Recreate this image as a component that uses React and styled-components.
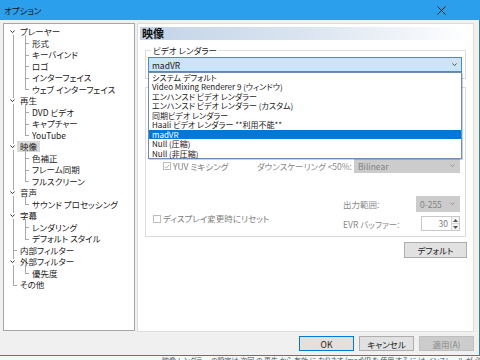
import React from 'react';
import styled, { createGlobalStyle } from 'styled-components';

const FONT = `"Noto Sans CJK JP", "Noto Sans", sans-serif`;

const Global = createGlobalStyle`
  html, body { margin: 0; padding: 0; background: #f0f0f0; }
  * { box-sizing: border-box; }
`;

const Screen = styled.div`
  width: 480px;
  height: 360px;
  overflow: hidden;
  display: flex;
  flex-direction: column;
  font-family: ${FONT};
  font-feature-settings: "palt";
  font-size: 8.5px;
  color: #1a1a1a;
  background: #f0f0f0;
`;

const TitleBar = styled.div`
  height: 20px;
  flex: none;
  background: #2b9fec;
  display: flex;
  align-items: center;
  justify-content: space-between;
  padding-left: 4px;
`;

const Title = styled.span`
  font-size: 8.5px;
  color: #111;
  line-height: 10px;
`;

const CloseBox = styled.span`
  width: 20px;
  height: 20px;
  margin-right: 29px;
  display: flex;
  align-items: center;
  justify-content: center;
`;

const Body = styled.div`
  height: 336px;
  flex: none;
  display: flex;
  flex-direction: column;
  border-right: 1px solid #1a86d8;
  border-bottom: 1px solid #1a86d8;
`;

const Main = styled.div`
  display: flex;
  gap: 2px;
  padding: 3px 5px 0 3px;
  height: 311px;
  flex: none;
`;

const TreeBox = styled.div`
  width: 132px;
  height: 308px;
  flex: none;
  background: #fff;
  border: 1px solid #a7a7a7;
  padding-top: 1.5px;
`;

const Row = styled.div`
  position: relative;
  height: 11.5px;
  display: flex;
  align-items: center;
`;

const Guide = styled.span`
  position: relative;
  flex: none;
  align-self: stretch;
  width: ${p => p.$w}px;
`;

const VLine = styled.span`
  position: absolute;
  left: ${p => p.$left}px;
  top: ${p => p.$top};
  bottom: ${p => p.$bottom};
  border-left: 1px solid #a9a9a9;
`;

const HLine = styled.span`
  position: absolute;
  top: 6px;
  left: ${p => p.$left}px;
  width: ${p => p.$width}px;
  border-top: 1px solid #a9a9a9;
`;

const ChevWrap = styled.span`
  position: absolute;
  left: 6px;
  top: 4.5px;
  width: 5px;
  height: 4px;
  display: flex;
`;

const Label = styled.span`
  height: 10.5px;
  line-height: 10.5px;
  padding: 0 3px;
  white-space: nowrap;
  background: ${p => (p.$sel ? '#d9d9d9' : 'transparent')};
  color: #1a1a1a;
`;

const Panel = styled.div`
  width: 337px;
  height: 309px;
  flex: none;
  background: #fff;
  border: 1px solid #dcdcdc;
  display: flex;
  flex-direction: column;
  padding: 3px 4px 0 2px;
`;

const Header = styled.div`
  height: 13px;
  flex: none;
  background: linear-gradient(to right, #c2d3e8 0%, #dde6f1 55%, #ffffff 100%);
  font-size: 11px;
  font-weight: bold;
  line-height: 13px;
  padding-left: 2px;
  color: #111;
`;

const Fieldset = styled.fieldset`
  margin: 5px 3px 0 5px;
  border: 1px solid #dcdcdc;
  padding: 2px 3px 6px 2px;
  min-width: 0;
`;

const Legend = styled.legend`
  font-size: 8.5px;
  line-height: 10px;
  padding: 0 2px;
  margin-left: 3px;
  color: #1a1a1a;
`;

const ComboWrap = styled.div`
  position: relative;
  z-index: 5;
`;

const Combo = styled.div`
  height: 15px;
  background: #cce4f7;
  border: 1px solid #3c8fdc;
  display: flex;
  align-items: center;
  justify-content: space-between;
  padding: 0 4px 0 3px;
  line-height: 12px;
`;

const List = styled.div`
  position: absolute;
  top: 100%;
  left: 0;
  right: 0;
  background: #fff;
  border: 1px solid #6e8db5;
  box-shadow: 1px 1px 0 rgba(0, 0, 0, 0.18);
  padding: 0;
  font-size: 8px;
`;

const Item = styled.div`
  height: 9.45px;
  line-height: 9.45px;
  padding-left: 3px;
  white-space: nowrap;
  background: ${p => (p.$sel ? '#0078d7' : '#fff')};
  color: ${p => (p.$sel ? '#fff' : '#1a1a1a')};
`;

const Group = styled.div`
  margin: 8px 3px 0 5px;
  border: 1px solid #dcdcdc;
  display: flex;
  flex-direction: column;
  padding-bottom: 5px;
`;

const Spacer = styled.div`
  height: ${p => p.$h}px;
  flex: none;
`;

const OptRow = styled.div`
  height: 14px;
  display: flex;
  align-items: center;
  padding-right: 5px;
`;

const Check = styled.span`
  width: 8px;
  height: 8px;
  flex: none;
  border: 1px solid #bcbcbc;
  background: #fff;
  display: flex;
  align-items: center;
  justify-content: center;
  margin-left: ${p => p.$ml || 0}px;
  margin-right: 2px;
`;

const Dim = styled.span`
  color: #7c7c7c;
  white-space: nowrap;
  line-height: 11px;
`;

const PushRight = styled.span`
  margin-left: auto;
  margin-right: 2px;
  color: #8a8a8a;
  white-space: nowrap;
`;

const DisSelect = styled.div`
  width: ${p => p.$w}px;
  height: ${p => p.$h}px;
  flex: none;
  background: #cccccc;
  border: 1px solid #cccccc;
  display: flex;
  align-items: center;
  justify-content: space-between;
  padding: 0 4px 0 3px;
  color: #838383;
  justify-self: end;
`;

const Lower = styled.div`
  display: flex;
  justify-content: space-between;
  padding-right: 5px;
`;

const LeftCol = styled.div`
  padding-top: 17px;
  padding-left: 7px;
  display: flex;
  align-items: flex-start;
`;

const CheckLine = styled.div`
  display: flex;
  align-items: center;
  height: 11px;
`;

const FieldGrid = styled.div`
  display: grid;
  grid-template-columns: 73px 44px;
  grid-template-rows: 16px 15px;
  row-gap: 4px;
  align-items: center;
`;

const FieldLabel = styled.span`
  color: #8a8a8a;
  white-space: nowrap;
`;

const Spin = styled.div`
  width: 39px;
  height: 15px;
  justify-self: end;
  border: 1px solid #c8c8c8;
  background: #fff;
  display: flex;
`;

const SpinValue = styled.span`
  flex: 1;
  text-align: right;
  padding-right: 3px;
  line-height: 13px;
  color: #7c7c7c;
`;

const SpinBtns = styled.span`
  width: 8px;
  display: flex;
  flex-direction: column;
  border-left: 1px solid #d6d6d6;
`;

const SpinBtn = styled.span`
  flex: 1;
  display: flex;
  align-items: center;
  justify-content: center;
  background: #f4f4f4;
  border-bottom: ${p => (p.$top ? '1px solid #d6d6d6' : 'none')};
`;

const DefaultBtn = styled.div`
  align-self: flex-end;
  margin: 5px 2px 0 0;
  width: 63px;
  height: 16px;
  background: #e1e1e1;
  border: 1px solid #adadad;
  display: flex;
  align-items: center;
  justify-content: center;
`;

const Footer = styled.div`
  flex: 1;
  display: flex;
  justify-content: flex-end;
  align-items: flex-start;
  gap: 5px;
  padding: 5px 5px 0 0;
`;

const Button = styled.div`
  width: 55px;
  height: 15px;
  display: flex;
  align-items: center;
  justify-content: center;
  background: ${p => (p.$disabled ? '#cccccc' : '#e1e1e1')};
  border: 1px solid ${p => (p.$primary ? '#0078d7' : p.$disabled ? '#bfbfbf' : '#adadad')};
  color: ${p => (p.$disabled ? '#8a8a8a' : '#1a1a1a')};
`;

const BottomStrip = styled.div`
  flex: 1;
  background: #f7f7f7;
  overflow: hidden;
  padding-left: 162px;
`;

const StripText = styled.div`
  font-size: 7px;
  line-height: 7px;
  margin-top: 1px;
  color: #555;
  white-space: nowrap;
`;

const Chevron = ({ color = '#333', w = 5, h = 3.5 }) => (
  <svg width={w} height={h} viewBox="0 0 5 3.5">
    <polyline points="0.5,0.5 2.5,2.7 4.5,0.5" fill="none" stroke={color} strokeWidth="1" />
  </svg>
);

const Tick = () => (
  <svg width="7" height="7" viewBox="0 0 7 7">
    <polyline points="1,3.6 2.8,5.4 6,1.4" fill="none" stroke="#a3a3a3" strokeWidth="1" />
  </svg>
);

const Tri = ({ up }) => (
  <svg width="5" height="3" viewBox="0 0 5 3">
    <polygon points={up ? '0,3 5,3 2.5,0' : '0,0 5,0 2.5,3'} fill="#555" />
  </svg>
);

const tree = [
  { t: 'プレーヤー', c: ['形式', 'キーバインド', 'ロゴ', 'インターフェイス', 'ウェブ インターフェイス'] },
  { t: '再生', c: ['DVD ビデオ', 'キャプチャー', 'YouTube'] },
  { t: '映像', sel: true, c: ['色補正', 'フレーム同期', 'フルスクリーン'] },
  { t: '音声', c: ['サウンド プロセッシング'] },
  { t: '字幕', c: ['レンダリング', 'デフォルト スタイル'] },
  { t: '内部フィルター' },
  { t: '外部フィルター', c: ['優先度'] },
  { t: 'その他' },
];

const renderers = [
  'システム デフォルト',
  'Video Mixing Renderer 9 (ウィンドウ)',
  'エンハンスド ビデオ レンダラー',
  'エンハンスド ビデオ レンダラー (カスタム)',
  '同期ビデオ レンダラー',
  'Haali ビデオ レンダラー **利用不能**',
  'madVR',
  'Null (圧縮)',
  'Null (非圧縮)',
];

function Tree() {
  const rows = [];
  tree.forEach((n, i) => {
    const lastTop = i === tree.length - 1;
    rows.push(
      <Row key={n.t}>
        <Guide $w={13}>
          {n.c ? (
            <>
              {i > 0 && <VLine $left={9} $top="0" $bottom="8px" />}
              <ChevWrap><Chevron /></ChevWrap>
              {!lastTop && <VLine $left={9} $top="9px" $bottom="0" />}
            </>
          ) : (
            <>
              <VLine $left={9} $top="0" $bottom={lastTop ? '5.5px' : '0'} />
              <HLine $left={9} $width={4} />
            </>
          )}
        </Guide>
        <Label $sel={n.sel}>{n.t}</Label>
        {n.c && <VLine $left={21} $top="9.5px" $bottom="0" />}
      </Row>
    );
    (n.c || []).forEach((c, j) => {
      const lastChild = j === n.c.length - 1;
      rows.push(
        <Row key={n.t + c}>
          <Guide $w={13}>
            <VLine $left={9} $top="0" $bottom="0" />
          </Guide>
          <Guide $w={12}>
            <VLine $left={8} $top="0" $bottom={lastChild ? '5.5px' : '0'} />
            <HLine $left={8} $width={4} />
          </Guide>
          <Label>{c}</Label>
        </Row>
      );
    });
  });
  return <TreeBox>{rows}</TreeBox>;
}

export default function App() {
  return (
    <Screen>
      <Global />
      <TitleBar>
        <Title>オプション</Title>
        <CloseBox>
          <svg width="9" height="9" viewBox="0 0 9 9">
            <path d="M0.5 0.5 L8.5 8.5 M8.5 0.5 L0.5 8.5" stroke="#1a1a1a" strokeWidth="1" />
          </svg>
        </CloseBox>
      </TitleBar>
      <Body>
        <Main>
          <Tree />
          <Panel>
            <Header>映像</Header>
            <Fieldset>
              <Legend>ビデオ レンダラー</Legend>
              <ComboWrap>
                <Combo>
                  <span>madVR</span>
                  <Chevron color="#555" />
                </Combo>
                <List>
                  {renderers.map(r => (
                    <Item key={r} $sel={r === 'madVR'}>{r}</Item>
                  ))}
                </List>
              </ComboWrap>
            </Fieldset>
            <Group>
              <Spacer $h={71} />
              <OptRow>
                <Check $ml={17}><Tick /></Check>
                <Dim>YUV ミキシング</Dim>
                <PushRight>ダウンスケーリング &lt;50%:</PushRight>
                <DisSelect $w={106} $h={14}>
                  <span>Bilinear</span>
                  <Chevron color="#9a9a9a" />
                </DisSelect>
              </OptRow>
              <Spacer $h={23} />
              <Lower>
                <LeftCol>
                  <CheckLine>
                    <Check />
                    <Dim>ディスプレイ変更時にリセット</Dim>
                  </CheckLine>
                </LeftCol>
                <FieldGrid>
                  <FieldLabel>出力範囲:</FieldLabel>
                  <DisSelect $w={44} $h={16}>
                    <span>0-255</span>
                    <Chevron color="#9a9a9a" />
                  </DisSelect>
                  <FieldLabel>EVR バッファー:</FieldLabel>
                  <Spin>
                    <SpinValue>30</SpinValue>
                    <SpinBtns>
                      <SpinBtn $top><Tri up /></SpinBtn>
                      <SpinBtn><Tri /></SpinBtn>
                    </SpinBtns>
                  </Spin>
                </FieldGrid>
              </Lower>
            </Group>
            <DefaultBtn>デフォルト</DefaultBtn>
          </Panel>
        </Main>
        <Footer>
          <Button $primary>OK</Button>
          <Button>キャンセル</Button>
          <Button $disabled>適用(A)</Button>
        </Footer>
      </Body>
      <BottomStrip>
        <StripText>映像 レンダラー の設定は 次回 の 再生 から 有効 に なります (madVR を 使用 する に は インストール が 必要 です)</StripText>
      </BottomStrip>
    </Screen>
  );
}
